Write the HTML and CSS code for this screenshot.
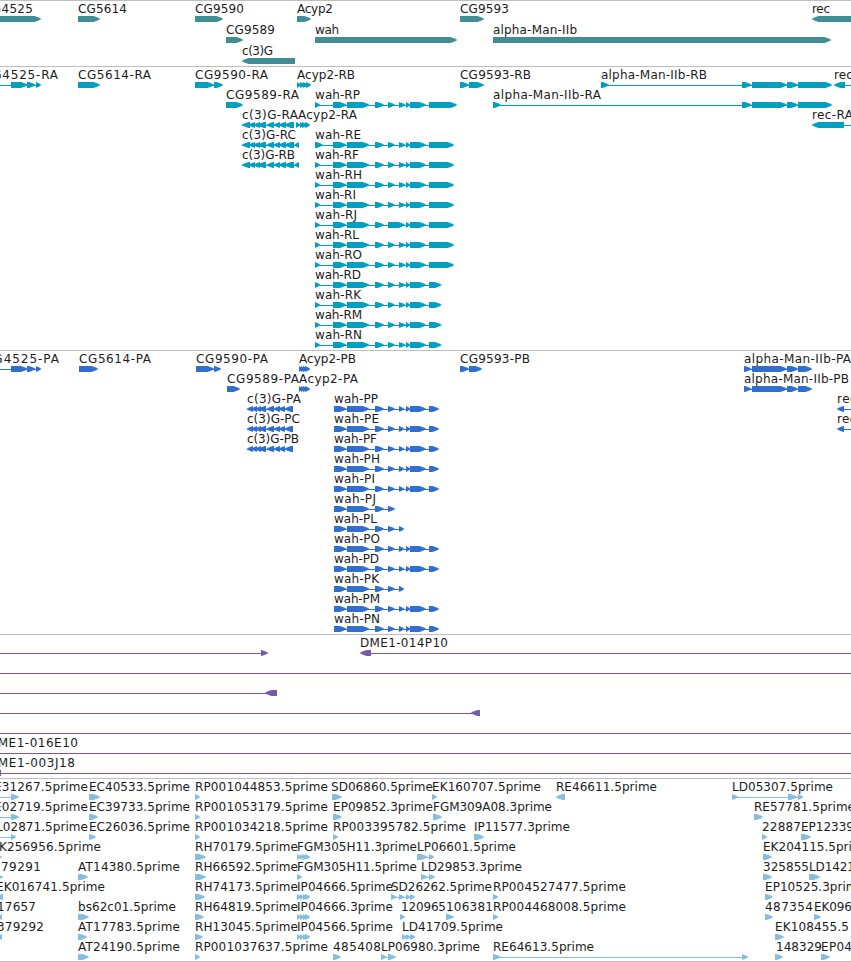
FILE: index.html
```html
<!DOCTYPE html>
<html lang="en">
<head>
    <meta charset="UTF-8">
    <title>Genome Browser</title>
    <link rel="stylesheet" href="styles.css">
</head>
<body>
    <main class="browser">
        <svg class="track genes" id="genes"></svg>
        <svg class="track transcripts" id="transcripts"></svg>
        <svg class="track proteins" id="proteins"></svg>
        <svg class="track clones" id="clones"></svg>
        <svg class="track ests" id="ests"></svg>
    </main>
    <script src="script.js"></script>
</body>
</html>
```

FILE: styles.css
```css
body {
    margin: 0;
    background-color: #ffffff;
    overflow: hidden;
}

.browser {
    display: flex;
    flex-direction: column;
    width: 851px;
    height: 961px;
    border-bottom: 1px solid #bebebe;
}

.track {
    display: block;
    flex: none;
    width: 100%;
    box-sizing: border-box;
    border-top: 1px solid #bebebe;
    overflow: hidden;
}

.track text {
    font-family: "DejaVu Sans", sans-serif;
    font-size: 12px;
    fill: #1c1c1c;
}

.genes {
    height: 66px;
    fill: #408e94;
}

.transcripts {
    height: 284px;
    fill: #029fc1;
}

.proteins {
    height: 284px;
    fill: #316fcf;
}

.clones {
    height: 144px;
    fill: #7659a7;
}

.ests {
    height: 183px;
    fill: #87bddf;
}

.intron {
    shape-rendering: crispEdges;
}
```

FILE: script.js
```js
const NS = 'http://www.w3.org/2000/svg';
const HEAD = 7;

function add(parent, name, attrs) {
    const el = document.createElementNS(NS, name);
    for (const key in attrs) el.setAttribute(key, attrs[key]);
    parent.appendChild(el);
    return el;
}

// block with an arrow head on its right (dir 1) or left (dir -1) end
function arrow(svg, x1, x2, y, dir) {
    const head = Math.min(HEAD, x2 - x1);
    const tip = dir > 0 ? x2 : x1;
    const back = dir > 0 ? x1 : x2;
    const neck = tip - dir * head;
    const mid = tip - dir * head * 0.5;
    add(svg, 'polygon', {
        points: `${back},${y} ${neck},${y} ${mid},${y + 1.2} ${tip},${y + 3} ${mid},${y + 4.8} ${neck},${y + 6} ${back},${y + 6}`
    });
}

// feature: [row, label, label start, label end, exons, direction, intron range]
function draw(id, pitch, features) {
    const svg = document.getElementById(id);
    features.forEach(([row, label, x, end, exons, dir = 1, line]) => {
        const y = 15 + row * pitch;
        const range = line || (exons.length > 1 ? [exons[0][0], exons[exons.length - 1][1] - 2] : null);
        if (range) {
            add(svg, 'rect', { class: 'intron', x: range[0], y: y + 3, width: range[1] - range[0], height: 1 });
        }
        exons.forEach(([a, b]) => arrow(svg, a, b, y, dir));
        if (label) {
            const text = add(svg, 'text', { x: x, y: y - 3, textLength: end - x });
            text.textContent = label;
        }
    });
}

draw('genes', 21, [
    [0, 'CG4525', -17, 33, [[-20, 41.5]]],
    [0, 'CG5614', 78, 127, [[78, 100.5]]],
    [0, 'CG9590', 195, 244, [[195, 223.5]]],
    [1, 'CG9589', 226, 275, [[226, 243.5]]],
    [2, 'c(3)G', 242, 273, [[241.5, 295]], -1],
    [0, 'Acyp2', 297, 333, [[297, 311.5]]],
    [1, 'wah', 315, 339, [[315, 457.5]]],
    [0, 'CG9593', 460, 509, [[460, 484.5]]],
    [1, 'alpha-Man-IIb', 493, 577, [[493, 831.5]]],
    [0, 'rec', 812, 830, [[811.5, 870]], -1]
]);

const c3gExons = [[241.5, 250], [248, 255], [253, 260], [257, 266], [266, 274], [273, 280], [278, 286], [284, 294]];
const manExons = [[742, 752], [752, 787.5], [787, 798.5], [798, 832.5]];

draw('transcripts', 20, [
    [0, 'CG4525-RA', -17, 58, [[11, 28], [27, 36], [36, 41.5]], 1, [0, 40]],
    [0, 'CG5614-RA', 78, 151, [[78, 100.5]]],
    [0, 'CG9590-RA', 195, 268, [[195, 214.5], [214, 223.5]]],
    [1, 'CG9589-RA', 226, 299, [[226, 243.5]]],
    [2, 'c(3)G-RA', 242, 298, c3gExons, -1],
    [3, 'c(3)G-RC', 242, 296, c3gExons.concat([[294, 299]]), -1],
    [4, 'c(3)G-RB', 242, 295, c3gExons.concat([[294, 299]]), -1],
    [0, 'Acyp2-RB', 297, 355, [[297, 301], [300, 305], [303, 308], [306, 311.5]]],
    [2, 'Acyp2-RA', 298, 357, [[296, 300.5], [300, 304], [302, 307], [305, 310.5]]],
    [0, 'CG9593-RB', 460, 531, [[460, 469.5], [469, 484.5]]],
    [0, 'alpha-Man-IIb-RB', 601, 707, [[601, 609.5]].concat(manExons)],
    [1, 'alpha-Man-IIb-RA', 493, 601, [[493, 501.5]].concat(manExons)],
    [0, 'rec-RB', 834, 874, [[833.5, 845]], -1, [840, 851]],
    [2, 'rec-RA', 812, 853, [[811.5, 844]], -1, [820, 851]]
]);

// wah isoforms: [name, label end, end of last exon]
const wahRna = [
    ['RP', 360, 457.5], null, ['RE', 361, 454.5], ['RF', 359, 454.5], ['RH', 362, 454.5],
    ['RI', 356, 454.5], ['RJ', 357, 454.5], ['RL', 359, 454.5], ['RO', 362, 454.5],
    ['RD', 361, 442], ['RK', 361, 442], ['RM', 362, 442], ['RN', 362, 442]
];
wahRna.forEach((item, i) => {
    if (!item) return;
    const [name, end, last] = item;
    const middle = name === 'RJ' ? [[388, 405.5]] : [[388, 395.5], [399, 406]];
    draw('transcripts', 20, [[i + 1, 'wah-' + name, 315, end,
        [[315, name === 'RE' ? 323.5 : 320.5], [333, 347], [347, 369.7], [375, 384.5]]
            .concat(middle, [[406, 410.5], [410, 426.5], [429, last]])]]);
});

const c3gCds = [[246.5, 253], [251, 257], [255, 261], [258, 266], [266, 274], [273, 280], [278, 285], [284, 293]];
const acypCds = [[299, 302.5], [301, 305], [303, 307.5], [305, 310.5]];
const manCds = [[744, 752], [752, 787.5], [787, 798.5], [798, 812.5]];

draw('proteins', 20, [
    [0, 'CG4525-PA', -16, 59, [[11, 28], [27, 36], [36, 41.5]], 1, [0, 40]],
    [0, 'CG5614-PA', 79, 151, [[79, 98.5]]],
    [0, 'CG9590-PA', 196, 268, [[196, 214.5], [214, 221.5]]],
    [1, 'CG9589-PA', 227, 299, [[227, 240.5]]],
    [2, 'c(3)G-PA', 247, 301, c3gCds, -1],
    [3, 'c(3)G-PC', 247, 300, c3gCds, -1],
    [4, 'c(3)G-PB', 247, 299, c3gCds, -1],
    [0, 'Acyp2-PB', 299, 356, acypCds],
    [1, 'Acyp2-PA', 299, 358, acypCds],
    [0, 'CG9593-PB', 460, 530, [[460, 469.5], [469, 482.5]]],
    [0, 'alpha-Man-IIb-PA', 744, 851, manCds],
    [1, 'alpha-Man-IIb-PB', 744, 849, manCds],
    [2, 'rec-PA', 837, 877, [[836.5, 844]], -1, [840, 851]],
    [3, 'rec-PB', 837, 877, [[836.5, 844]], -1, [840, 851]]
]);

const wahCds = [[334, 347], [347, 369.7], [375, 384.5], [388, 395.5], [399, 404.5], [406, 410.5], [410, 426.5], [429, 439.5]];
[
    ['PP', 378, 8], ['PE', 379, 8], ['PF', 377, 8], ['PH', 380, 8], ['PI', 375, 8], ['PJ', 376, 4],
    ['PL', 377, 5], ['PO', 380, 8], ['PD', 379, 8], ['PK', 379, 5], ['PM', 380, 8], ['PN', 380, 8]
].forEach(([name, end, count], i) => {
    draw('proteins', 20, [[i + 2, 'wah-' + name, 334, end, wahCds.slice(0, count)]]);
});

draw('clones', 20, [
    [0, '', 0, 0, [[261, 268.5]], 1, [0, 262]],
    [0, 'DME1-014P10', 360, 448, [[359.5, 371]], -1, [370, 851]],
    [1, '', 0, 0, [], 1, [0, 851]],
    [2, '', 0, 0, [[264.5, 277]], -1, [0, 270]],
    [3, '', 0, 0, [[470.5, 480]], -1, [0, 475]],
    [4, '', 0, 0, [], 1, [0, 851]],
    [5, 'DME1-016E10', -12, 78, [], 1, [0, 851]],
    [6, 'DME1-003J18', -12, 75, [[-9, 1]], -1, [0, 851]]
]);

const fgm = [[297, 301], [300, 304], [303, 307], [305, 310.5]];

draw('ests', 20, [
    [0, 'E31267.5prime', -6, 88, [[11, 19.5]], 1, [0, 12]],
    [1, 'E02719.5prime', -6, 88, [[11, 19.5]], 1, [0, 12]],
    [2, 'L02871.5prime', -4, 88, [[11, 16.5]], 1, [0, 12]],
    [3, 'K256956.5prime', -1, 101, [[-5, 2.5]]],
    [4, '79291', 1, 41, [[-3, 3.5]]],
    [5, 'EK016741.5prime', -4, 105, [[-5, 3]], -1],
    [6, '17657', -3, 36, [[-2, 2]], -1],
    [7, '379292', -3, 44, [[-2, 2]], -1],

    [0, 'EC40533.5prime', 89, 190, [[89, 100.5]]],
    [1, 'EC39733.5prime', 89, 190, [[89, 98.5]]],
    [2, 'EC26036.5prime', 89, 190, [[89, 96.5]]],
    [4, 'AT14380.5prime', 78, 180, [[78, 88.5]]],
    [6, 'bs62c01.5prime', 78, 176, [[78, 89.5]]],
    [7, 'AT17783.5prime', 78, 180, [[78, 87.5]]],
    [8, 'AT24190.5prime', 78, 180, [[78, 89.5]]],

    [0, 'RP001044853.5prime', 195, 328, [[195, 200.5]]],
    [1, 'RP001053179.5prime', 195, 328, [[195, 200.5]]],
    [2, 'RP001034218.5prime', 195, 328, [[195, 200.5]]],
    [3, 'RH70179.5prime', 195, 298, [[195, 206.5]]],
    [4, 'RH66592.5prime', 195, 298, [[195, 206.5]]],
    [5, 'RH74173.5prime', 195, 298, [[195, 205.5]]],
    [6, 'RH64819.5prime', 195, 298, [[195, 204.5]]],
    [7, 'RH13045.5prime', 195, 298, [[195, 203.5]]],
    [8, 'RP001037637.5prime', 195, 328, [[195, 200.5]]],

    [3, 'FGM305H11.3prime', 297, 417, fgm],
    [4, 'FGM305H11.5prime', 297, 417, [[297, 302.5]]],
    [5, 'IP04666.5prime', 297, 393, fgm],
    [6, 'IP04666.3prime', 297, 393, fgm],
    [7, 'IP04566.5prime', 297, 393, fgm],

    [0, 'SD06860.5prime', 331, 433, [[332, 342.5]]],
    [1, 'EP09852.3prime', 333, 433, [[333, 342.5]]],
    [2, 'RP003395782.5prime', 333, 466, [[333, 338.5]]],
    [8, '485408', 333, 381, [[333, 341.5]]],

    [0, 'EK160707.5prime', 432, 541, [[432, 437.5]]],
    [1, 'FGM309A08.3prime', 433, 552, [[433, 442.5]]],
    [2, 'IP11577.3prime', 474, 570, [[474, 484.5]]],
    [3, 'LP06601.5prime', 417, 516, [[417, 428], [429, 434.5]]],
    [4, 'LD29853.3prime', 421, 522, [[421, 428], [429, 435.5]]],
    [5, 'SD26262.5prime', 391, 492, [[391, 397], [399, 405], [406, 410.5], [410, 415.5]]],
    [6, '120965', 401, 446, [[400, 405.5]]],
    [6, '106381', 446, 493, [[446, 454.5]]],
    [7, 'LD41709.5prime', 402, 503, [[402, 407], [406, 410.5], [410, 416]]],
    [8, 'LP06980.3prime', 381, 480, [[381, 387], [388, 396.5]]],

    [0, 'RE46611.5prime', 556, 657, [[555.5, 565]], -1],
    [5, 'RP004527477.5prime', 493, 626, [[493, 498.5]]],
    [6, 'RP004468008.5prime', 493, 626, [[493, 498.5]]],
    [8, 'RE64613.5prime', 493, 594, [[493, 501], [742, 748.5]]],

    [0, 'LD05307.5prime', 732, 833, [[732, 738.5], [788, 797.5], [798, 803.5]]],
    [1, 'RE57781.5prime', 754, 855, [[754, 763.5]]],
    [2, '22887', 762, 801, [[762, 767.5]]],
    [2, 'EP12339', 801, 854, [[801, 811.5]]],
    [3, 'EK204115.5prime', 763, 871, [[763, 772.5]]],
    [4, '325855', 763, 809, [[763, 772.5]]],
    [4, 'LD1421', 809, 855, [[809, 820.5]]],
    [5, 'EP10525.3prime', 765, 865, [[765, 773.5]]],
    [6, '487354', 765, 813, [[765, 773.5]]],
    [6, 'EK096', 814, 852, [[814, 821.5]]],
    [7, 'EK108455.5', 775, 849, [[775, 784.5]]],
    [8, '148329', 776, 822, [[775, 783.5]]],
    [8, 'EP04', 821, 852, [[821, 830.5]]]
]);
```
